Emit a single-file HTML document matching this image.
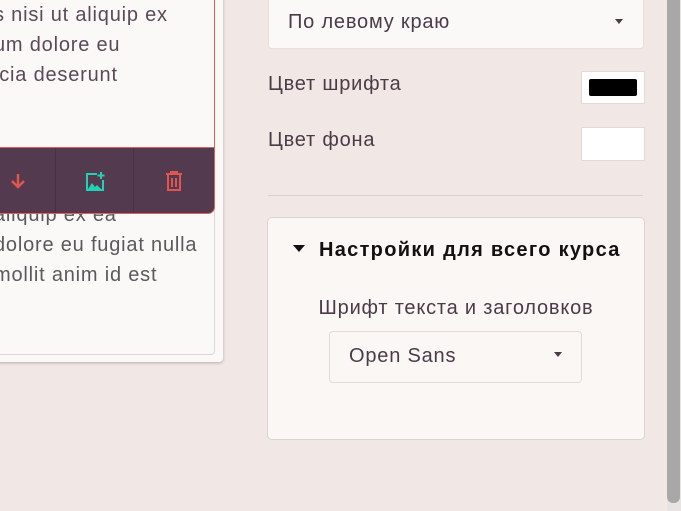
<html><head><style>
body{margin:0;width:681px;height:511px;overflow:hidden;background:#f1e7e4;font-family:"Liberation Sans",sans-serif;color:#4b3a48;position:relative}
.a{position:absolute}
.t{font-size:20px;letter-spacing:0.8px;white-space:nowrap}
</style></head><body>
<div class="a" style="left:-10px;top:-10px;width:233px;height:372px;background:#fbf9f8;border-radius:4px;box-shadow:0 1px 3px rgba(0,0,0,.25)"></div>
<div class="a" style="left:-10px;top:150px;width:223px;height:203px;border:1px solid #ddd7d5;border-radius:4px"></div>
<div class="a t" style="left:-6px;top:200px;color:#5a5a5a;line-height:30px">aliquip ex ea<br>dolore eu fugiat nulla<br>mollit anim id est</div>
<div class="a" style="left:-10px;top:-10px;width:223px;height:158px;background:#fbf9f8;border:1px solid #e0605a"></div>
<div class="a t" style="left:-6px;top:0px;color:#5a4a58;line-height:30px">s nisi ut aliquip ex<br>um dolore eu<br>icia deserunt</div>
<div class="a" style="left:-10px;top:148px;width:224px;height:65px;background:#533a4f;border-radius:0 0 6px 0;box-shadow:0 0 0 1px #e0605a"></div>
<div class="a" style="left:55px;top:148px;width:1px;height:65px;background:#473244"></div>
<div class="a" style="left:133px;top:148px;width:1px;height:65px;background:#473244"></div>
<svg class="a" style="left:8px;top:171px" width="20" height="20" viewBox="0 0 20 20"><path d="M10 3v13M4 10l6 6 6-6" stroke="#e0564e" stroke-width="2.5" fill="none"/></svg>
<svg class="a" style="left:84px;top:171px" width="22" height="22" viewBox="0 0 22 22"><path d="M13 3H3v16h16V9" stroke="#1fd1b5" stroke-width="2" fill="none"/><path d="M17 1v7M13.5 4.5h7" stroke="#1fd1b5" stroke-width="2"/><path d="M4 18l4-6 3 4 2-2 4 4z" fill="#1fd1b5"/></svg>
<svg class="a" style="left:164px;top:170px" width="20" height="22" viewBox="0 0 20 22"><path d="M2 4h16M7 4V2h6v2M4 5v15h12V5M8 8v9M12 8v9" stroke="#e0564e" stroke-width="2" fill="none"/></svg>

<div class="a" style="left:268px;top:-10px;width:374px;height:57px;background:#fbf9f8;border:1px solid #e8dfdc;border-radius:4px"></div>
<div class="a t" style="left:288px;top:11px">По левому краю</div>
<div class="a" style="left:615px;top:19px;border:4px solid transparent;border-top:5px solid #4b3a48"></div>
<div class="a t" style="left:268px;top:73px">Цвет шрифта</div>
<div class="a t" style="left:268px;top:129px">Цвет фона</div>
<div class="a" style="left:581px;top:71px;width:62px;height:31px;background:#fff;border:1px solid #e2dad8"></div>
<div class="a" style="left:589px;top:79px;width:48px;height:17px;background:#000;border-radius:2px"></div>
<div class="a" style="left:581px;top:127px;width:62px;height:32px;background:#fff;border:1px solid #e2dad8"></div>
<div class="a" style="left:268px;top:195px;width:375px;height:1px;background:#d9cfcc"></div>
<div class="a" style="left:267px;top:217px;width:376px;height:221px;background:#faf7f5;border:1px solid #dcd4d2;border-radius:5px"></div>
<div class="a" style="left:293px;top:245px;border:6px solid transparent;border-top:7px solid #111"></div>
<div class="a t" style="left:319px;top:239px;font-weight:bold;color:#111;letter-spacing:1.3px">Настройки для всего курса</div>
<div class="a t" style="left:268px;width:376px;top:297px;text-align:center">Шрифт текста и заголовков</div>
<div class="a" style="left:329px;top:331px;width:251px;height:50px;background:#faf7f5;border:1px solid #e2dad8;border-radius:4px"></div>
<div class="a t" style="left:349px;top:345px">Open Sans</div>
<div class="a" style="left:554px;top:352px;border:4px solid transparent;border-top:5px solid #4b3a48"></div>
<div class="a" style="left:667px;top:0;width:14px;height:511px;background:#e8e4e3"></div>
<div class="a" style="left:667px;top:-10px;width:13px;height:513px;background:#a8a8a8;border-radius:6px"></div>
</body></html>
